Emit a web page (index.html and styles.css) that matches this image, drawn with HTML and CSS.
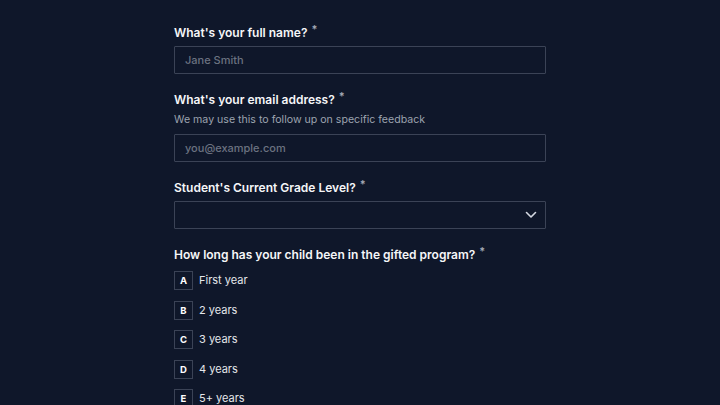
FILE: index.html
```html
<!DOCTYPE html>
<html lang="en">
<head>
<meta charset="utf-8">
<title>Feedback form</title>
<link rel="stylesheet" href="styles.css">
</head>
<body>
<form class="form">
  <div class="field">
    <label class="label">What's your full name? <span class="req">*</span></label>
    <div class="input"><span class="ph">Jane Smith</span></div>
  </div>
  <div class="field">
    <label class="label">What's your email address? <span class="req">*</span></label>
    <p class="help">We may use this to follow up on specific feedback</p>
    <div class="input"><span class="ph">you@example.com</span></div>
  </div>
  <div class="field">
    <label class="label">Student's Current Grade Level? <span class="req">*</span></label>
    <div class="input select">
      <svg class="chev" width="12" height="8" viewBox="0 0 12 8"><path d="M1.5 1.5 L6 6 L10.5 1.5" fill="none" stroke="#d5d9e2" stroke-width="1.6" stroke-linecap="round" stroke-linejoin="round"/></svg>
    </div>
  </div>
  <div class="field">
    <label class="label">How long has your child been in the gifted program? <span class="req">*</span></label>
    <ul class="options">
      <li class="opt"><span class="key">A</span><span>First year</span></li>
      <li class="opt"><span class="key">B</span><span>2 years</span></li>
      <li class="opt"><span class="key">C</span><span>3 years</span></li>
      <li class="opt"><span class="key">D</span><span>4 years</span></li>
      <li class="opt"><span class="key">E</span><span>5+ years</span></li>
    </ul>
  </div>
</form>
</body>
</html>
```

FILE: styles.css
```css
html, body {
  margin: 0;
  padding: 0;
  background: #0f172a;
  height: 100%;
  overflow: hidden;
}
body {
  font-family: "Inter", "Noto Sans", sans-serif;
  color: #f3f4f6;
}
.form {
  width: 372px;
  margin: 0 auto;
  padding-top: 23px;
  display: flex;
  flex-direction: column;
  gap: 16px;
}
.field {
  display: flex;
  flex-direction: column;
}
.label {
  font-size: 12px;
  font-weight: 600;
  line-height: 20px;
  color: #f5f6f8;
  margin-bottom: 3px;
}
.req {
  position: relative;
  top: -4px;
  color: #a3a9b5;
  font-size: 11px;
  margin-left: 1px;
}
.help {
  margin: -2px 0 5px;
  font-size: 10.6px;
  line-height: 18px;
  color: #9ca3af;
}
.input {
  box-sizing: border-box;
  height: 28px;
  border: 1px solid #3b4356;
  border-radius: 1px;
  display: flex;
  align-items: center;
  padding: 0 10px;
  font-size: 11px;
  font-weight: 500;
}
.ph {
  color: #6b7280;
}
.select {
  justify-content: flex-end;
  padding-right: 8px;
}
.options {
  list-style: none;
  margin: 3px 0 0;
  padding: 0;
  display: flex;
  flex-direction: column;
  gap: 10.5px;
}
.opt {
  display: flex;
  align-items: center;
  gap: 6px;
  font-size: 11px;
  line-height: 19px;
  color: #e5e7eb;
}
.key {
  box-sizing: border-box;
  width: 19px;
  height: 19px;
  border: 1px solid #3b4356;
  display: flex;
  align-items: center;
  justify-content: center;
  font-size: 9.5px;
  font-weight: 700;
  color: #ffffff;
}
```
